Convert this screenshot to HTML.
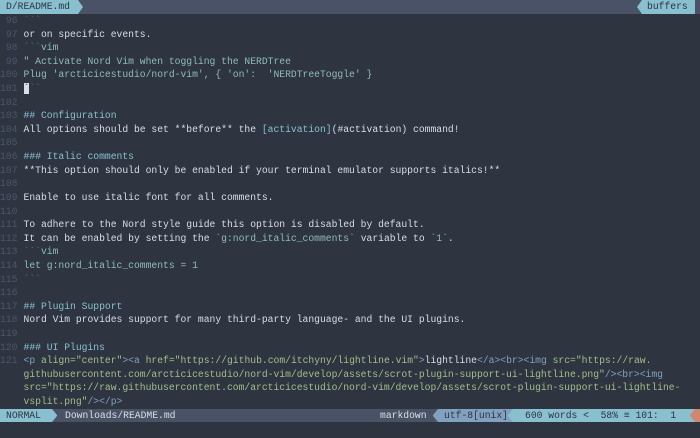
<!DOCTYPE html>
<html><head><meta charset="utf-8"><style>
*{margin:0;padding:0;box-sizing:border-box}
body{width:700px;height:438px;background:#2e3440;overflow:hidden;position:relative;font-family:"Liberation Mono",monospace;font-size:9.7px;color:#d8dee9}
.top{position:absolute;left:0;top:0;width:700px;height:14px;background:#4a5366}
.tab{position:absolute;left:0;top:0;height:14px;width:78px;background:#88c0d0;color:#2e3440;padding-left:6px;line-height:14px}
.tabar{position:absolute;left:78px;top:0;width:0;height:0;border-top:7px solid transparent;border-bottom:7px solid transparent;border-left:5px solid #88c0d0}
.buf{position:absolute;left:642px;top:0;height:14px;width:53px;background:#88c0d0;color:#2e3440;line-height:14px;padding-left:5px}
.bufar{position:absolute;left:637px;top:0;width:0;height:0;border-top:7px solid transparent;border-bottom:7px solid transparent;border-right:5px solid #88c0d0}
.ed{position:absolute;left:0;top:14px;width:700px}
.r{height:13.62px;line-height:13.62px;white-space:pre}
.n{display:inline-block;width:23.5px;color:#4c566a;text-align:right;padding-right:6px}
.h{color:#88c0d0}.c{color:#8fbcbb}.g{color:#a3be8c}.b{color:#81a1c1}.d{color:#616e88}
.cur{background:#d8dee9;color:#2e3440}
.st{position:absolute;left:0;top:409px;width:700px;height:13px;background:#4a5366;line-height:13px;white-space:pre}
.st div{position:absolute;top:0;height:13px}
</style></head><body>
<div class="top"><div class="tab">D/README.md</div><div class="tabar"></div><div class="bufar"></div><div class="buf">buffers</div></div>
<div class="ed">
<div class="r"><span class="n">96</span><span class="d">&#96;&#96;&#96;</span></div>
<div class="r"><span class="n">97</span>or on specific events.</div>
<div class="r"><span class="n">98</span><span class="d">&#96;&#96;&#96;</span><span class="c">vim</span></div>
<div class="r"><span class="n">99</span><span class="c">" Activate Nord Vim when toggling the NERDTree</span></div>
<div class="r"><span class="n">100</span><span class="c">Plug 'arcticicestudio/nord-vim', { 'on':  'NERDTreeToggle' }</span></div>
<div class="r"><span class="n">101</span><span class="cur">&#96;</span><span class="d">&#96;&#96;</span></div>
<div class="r"><span class="n">102</span></div>
<div class="r"><span class="n">103</span><span class="h">## Configuration</span></div>
<div class="r"><span class="n">104</span>All options should be set **before** the <span class="h">[activation]</span>(#activation) command!</div>
<div class="r"><span class="n">105</span></div>
<div class="r"><span class="n">106</span><span class="h">### Italic comments</span></div>
<div class="r"><span class="n">107</span>**This option should only be enabled if your terminal emulator supports italics!**</div>
<div class="r"><span class="n">108</span></div>
<div class="r"><span class="n">109</span>Enable to use italic font for all comments.</div>
<div class="r"><span class="n">110</span></div>
<div class="r"><span class="n">111</span>To adhere to the Nord style guide this option is disabled by default.</div>
<div class="r"><span class="n">112</span>It can be enabled by setting the <span class="c">&#96;g:nord_italic_comments&#96;</span> variable to <span class="c">&#96;1&#96;</span>.</div>
<div class="r"><span class="n">113</span><span class="d">&#96;&#96;&#96;</span><span class="c">vim</span></div>
<div class="r"><span class="n">114</span><span class="c">let g:nord_italic_comments = 1</span></div>
<div class="r"><span class="n">115</span><span class="d">&#96;&#96;&#96;</span></div>
<div class="r"><span class="n">116</span></div>
<div class="r"><span class="n">117</span><span class="h">## Plugin Support</span></div>
<div class="r"><span class="n">118</span>Nord Vim provides support for many third-party language- and the UI plugins.</div>
<div class="r"><span class="n">119</span></div>
<div class="r"><span class="n">120</span><span class="h">### UI Plugins</span></div>
<div class="r"><span class="n">121</span><span class="b">&lt;p </span><span class="g">align="center"</span><span class="b">&gt;&lt;a </span><span class="g">href="https://github.com/itchyny/lightline.vim"</span><span class="b">&gt;</span>lightline<span class="b">&lt;/a&gt;&lt;br&gt;&lt;img </span><span class="g">src="https://raw.</span></div>
<div class="r"><span class="n"></span><span class="g">githubusercontent.com/arcticicestudio/nord-vim/develop/assets/scrot-plugin-support-ui-lightline.png"</span><span class="b">/&gt;&lt;br&gt;&lt;img</span></div>
<div class="r"><span class="n"></span><span class="g">src="https://raw.githubusercontent.com/arcticicestudio/nord-vim/develop/assets/scrot-plugin-support-ui-lightline-</span></div>
<div class="r"><span class="n"></span><span class="g">vsplit.png"</span><span class="b">/&gt;&lt;/p&gt;</span></div>
</div>
<div class="st">
<div style="left:0;width:52px;background:#88c0d0;color:#2e3440;padding-left:6px">NORMAL</div>
<div style="left:52px;width:0;border-top:6.5px solid transparent;border-bottom:6.5px solid transparent;border-left:5px solid #88c0d0"></div>
<div style="left:65px;color:#d8dee9">Downloads/README.md</div>
<div style="left:380px;color:#d8dee9">markdown</div>
<div style="left:433px;width:0;border-top:6.5px solid transparent;border-bottom:6.5px solid transparent;border-right:5px solid #81a1c1"></div>
<div style="left:438px;width:70px;background:#81a1c1;color:#2e3440;padding-left:6px">utf-8[unix]</div>
<div style="left:508px;width:0;border-top:6.5px solid transparent;border-bottom:6.5px solid transparent;border-right:5px solid #88c0d0;background:#81a1c1"></div>
<div style="left:513px;width:182px;background:#88c0d0;color:#2e3440;padding-left:12px">600 words &lt;  58% ≡ 101:  1</div>
<div style="left:690px;width:0;border-top:6.5px solid transparent;border-bottom:6.5px solid transparent;border-right:5px solid #d08770;background:#88c0d0"></div>
<div style="left:695px;width:5px;background:#d08770"></div>
</div>
</body></html>
